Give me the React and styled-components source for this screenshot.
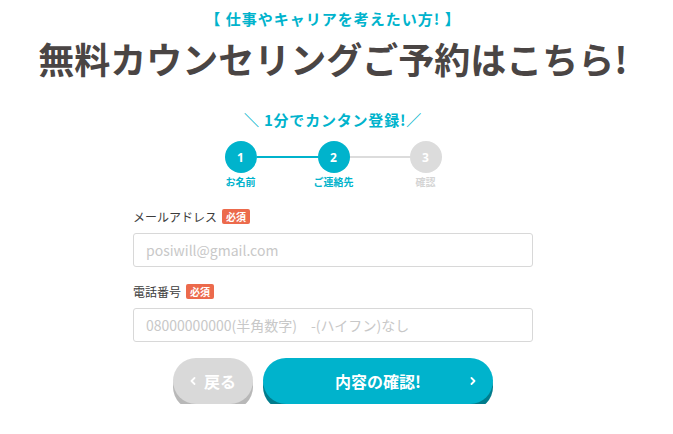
import styled, { createGlobalStyle } from 'styled-components';

const teal = '#00b3cc';

const GlobalStyle = createGlobalStyle`
  html, body {
    margin: 0;
    padding: 0;
    background: #fff;
  }
  body {
    font-family: "Noto Sans CJK JP", "Noto Sans", sans-serif;
    color: #4a4544;
  }
`;

const Page = styled.div`
  width: 666px;
  display: flex;
  flex-direction: column;
  align-items: center;
`;

const Lead = styled.p`
  margin: 8px 0 0;
  font-size: 15px;
  line-height: 22px;
  font-weight: 700;
  color: ${teal};
  letter-spacing: 1px;
`;

const Title = styled.h1`
  margin: 6px 0 0;
  font-size: 36px;
  line-height: 44px;
  font-weight: 700;
  color: #4a4544;
`;

const Catch = styled.p`
  margin: 29px 0 0;
  font-size: 15px;
  line-height: 22px;
  font-weight: 700;
  color: ${teal};
  letter-spacing: 0.8px;
`;

const Steps = styled.div`
  margin-top: 10px;
  display: flex;
  align-items: flex-start;
`;

const Step = styled.div`
  width: 32px;
  display: flex;
  flex-direction: column;
  align-items: center;
`;

const Circle = styled.div`
  width: 32px;
  height: 32px;
  border-radius: 50%;
  background: ${p => (p.$active ? teal : '#dcdcdc')};
  color: #fff;
  font-family: "Open Sans", "Noto Sans", sans-serif;
  font-size: 12px;
  font-weight: 700;
  display: flex;
  align-items: center;
  justify-content: center;
`;

const StepLabel = styled.span`
  margin-top: 2px;
  font-size: 10px;
  line-height: 14px;
  font-weight: 700;
  white-space: nowrap;
  color: ${p => (p.$active ? teal : '#d4d4d4')};
`;

const Connector = styled.div`
  width: ${p => p.$w}px;
  height: 2px;
  margin-top: 15px;
  background: ${p => (p.$active ? teal : '#dcdcdc')};
`;

const Form = styled.form`
  width: 400px;
  margin-top: 19px;
  display: flex;
  flex-direction: column;
`;

const Field = styled.div`
  display: flex;
  flex-direction: column;
  & + & {
    margin-top: 16px;
  }
`;

const LabelRow = styled.label`
  display: flex;
  align-items: center;
  gap: 5px;
  height: 16px;
  font-size: 12px;
  color: #3c3c3c;
`;

const Required = styled.span`
  display: inline-flex;
  align-items: center;
  height: 15px;
  padding: 0 4px;
  border-radius: 2px;
  background: #ec6a4c;
  color: #fff;
  font-size: 10px;
  font-weight: 700;
`;

const Input = styled.input`
  box-sizing: border-box;
  margin-top: 9px;
  width: 100%;
  height: 34px;
  padding: 0 12px;
  border: 1px solid #d8d8d8;
  border-radius: 3px;
  font-family: "Noto Sans CJK JP", "Noto Sans", sans-serif;
  font-size: 14px;
  color: #333;
  outline: none;
  &::placeholder {
    color: #c8c8c8;
  }
`;

const Buttons = styled.div`
  margin-top: 16px;
  display: flex;
  gap: 10px;
`;

const Button = styled.button`
  box-sizing: border-box;
  position: relative;
  width: ${p => p.$w}px;
  height: 46px;
  border: none;
  border-radius: 23px;
  background: ${p => p.$bg};
  box-shadow: 0 6px 0 ${p => p.$shadow};
  color: #fff;
  font-family: "Noto Sans CJK JP", "Noto Sans", sans-serif;
  font-size: 16px;
  font-weight: 700;
  display: flex;
  align-items: center;
  justify-content: center;
  gap: 8px;
  padding: 0;
  cursor: pointer;
`;

const Chevron = ({ dir = 'right', className }) => (
  <svg className={className} width="6" height="8" viewBox="0 0 6 8">
    <polyline
      points={dir === 'right' ? '1.5,1 4.5,4 1.5,7' : '4.5,1 1.5,4 4.5,7'}
      fill="none"
      stroke="#fff"
      strokeWidth="1.8"
      strokeLinecap="round"
      strokeLinejoin="round"
    />
  </svg>
);

// sits at the right end of the confirm button
const NextChevron = styled(Chevron)`
  position: absolute;
  right: 17px;
  top: 50%;
  margin-top: -4px;
`;

export default function App() {
  return (
    <>
      <GlobalStyle />
      <Page>
        <Lead>【 仕事やキャリアを考えたい方! 】</Lead>
        <Title>無料カウンセリングご予約はこちら!</Title>
        <Catch>＼ 1分でカンタン登録!／</Catch>
        <Steps>
          <Step>
            <Circle $active>1</Circle>
            <StepLabel $active>お名前</StepLabel>
          </Step>
          <Connector $w={61} $active />
          <Step>
            <Circle $active>2</Circle>
            <StepLabel $active>ご連絡先</StepLabel>
          </Step>
          <Connector $w={60} />
          <Step>
            <Circle>3</Circle>
            <StepLabel>確認</StepLabel>
          </Step>
        </Steps>
        <Form onSubmit={e => e.preventDefault()}>
          <Field>
            <LabelRow>
              メールアドレス<Required>必須</Required>
            </LabelRow>
            <Input type="email" placeholder="posiwill@gmail.com" />
          </Field>
          <Field>
            <LabelRow>
              電話番号<Required>必須</Required>
            </LabelRow>
            <Input type="tel" placeholder="08000000000(半角数字)　-(ハイフン)なし" />
          </Field>
        </Form>
        <Buttons>
          <Button type="button" $w={80} $bg="#d9d9d9" $shadow="#b8b8b8">
            <Chevron dir="left" />戻る
          </Button>
          <Button type="button" $w={230} $bg={teal} $shadow="#017c8c">
            内容の確認!
            <NextChevron />
          </Button>
        </Buttons>
      </Page>
    </>
  );
}
